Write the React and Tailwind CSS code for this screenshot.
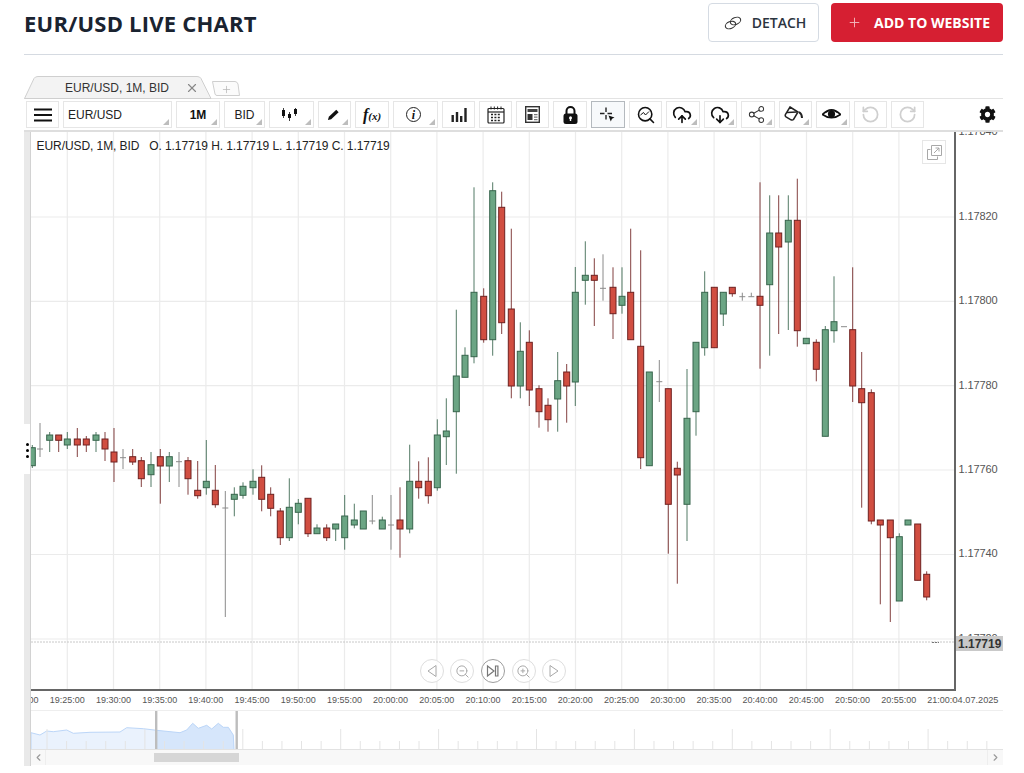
import { CloudUpload, CloudDownload, Share2, RotateCcw, RotateCw, Search, ZoomIn, ZoomOut, Plus, X, ChevronLeft, ChevronRight } from "lucide-react";
import { FaCog } from "react-icons/fa";

// x, high, low, body top, body bottom, type
const candles = [
  [32.3, 445, 468, 447.7, 465.7, "g"], [40, 423, 457, 449, 449, "d"], [49.7, 432, 452, 435, 440.3, "g"],
  [58.7, 435, 452, 435, 440.3, "r"], [67.3, 432, 449, 439, 445, "g"], [77.3, 428, 457, 439, 445, "r"],
  [86.3, 436, 452, 439, 445, "r"], [96, 432, 452, 435, 440.3, "g"], [105, 432, 461, 439, 449, "r"],
  [114, 428, 482, 452, 462, "r"], [123, 449, 469, 457.7, 457.7, "d"], [132.7, 449, 465, 456.7, 462, "r"],
  [141.3, 457, 487, 460.7, 478.7, "r"], [151, 452, 487, 464.7, 474.7, "g"], [160.3, 449, 503.7, 456.7, 466, "r"],
  [169.3, 452, 482, 456.7, 466, "g"], [179, 452, 487, 461.7, 461.7, "d"], [188, 457, 494.7, 460.7, 478.7, "r"],
  [197.7, 461, 498.7, 490.3, 495.7, "r"], [206.3, 440, 494.7, 481.3, 487.7, "g"], [215.3, 465, 507.7, 490.3, 504.7, "r"],
  [225.3, 491, 617, 508, 508, "d"], [234.3, 487.3, 516.3, 494.3, 499.3, "g"], [243, 482.3, 498.7, 486.3, 495.3, "g"],
  [253, 469.3, 494.7, 481.3, 487.7, "g"], [261.7, 465.3, 511.3, 477.3, 499.3, "r"], [270.7, 487.3, 516.3, 494.3, 508.3, "r"],
  [280.3, 508, 545, 511, 537.7, "r"], [289.3, 478.3, 541, 507.3, 537.7, "g"], [298.3, 499, 524.3, 503.3, 512.3, "g"],
  [308, 498.3, 537, 498.3, 533.7, "r"], [317, 524.3, 533.7, 528, 533.7, "g"], [326.7, 524.3, 541, 528, 537.7, "r"],
  [335.7, 524, 541, 524, 529, "g"], [344.7, 495, 549.7, 516, 537.7, "g"], [354.3, 503.7, 528.3, 520, 525, "g"],
  [363.3, 511, 529, 511, 529, "g"], [372.3, 495, 524.3, 521, 521, "d"], [382.3, 516.7, 529, 520, 529, "g"],
  [391, 495, 549.7, 525, 525, "d"], [400, 487.3, 557.7, 520, 529, "r"], [409.7, 444.7, 533.3, 481.3, 529, "g"],
  [418.7, 461.3, 498.7, 481.3, 487.7, "r"], [428.3, 457.3, 503.7, 481.3, 495.7, "r"], [437.3, 419.3, 490.7, 435, 487.7, "g"],
  [446.3, 398.3, 465, 431, 436.7, "g"], [456.3, 309.7, 473.7, 376, 411.7, "g"], [465, 347.3, 377.3, 355.3, 377.3, "g"],
  [474, 187.3, 363.3, 292.3, 356.7, "g"], [483.7, 288.3, 342.7, 296.3, 339.7, "r"], [492.7, 182.3, 355.7, 190.7, 339.7, "g"],
  [501.7, 191.7, 334, 207.3, 322.7, "r"], [511.3, 228.7, 398.3, 309, 386, "r"], [520.3, 322.3, 398.3, 351.3, 386, "g"],
  [529.3, 330.3, 406, 342.3, 390, "r"], [539, 385.3, 427.7, 388.7, 411.7, "r"], [548, 398.3, 431.7, 405.3, 419.7, "r"],
  [557.7, 352, 431.7, 380.7, 399, "g"], [566.7, 364, 422.7, 372, 386, "r"], [575.3, 267, 406, 292.3, 382, "g"],
  [585.3, 241.3, 304.7, 275.3, 280.3, "g"], [594.3, 258.3, 326, 275.3, 280.3, "r"], [603, 254.3, 300.7, 288.3, 288.3, "d"],
  [613, 267.3, 339, 287.3, 313.7, "r"], [622, 267.3, 313.7, 296.3, 305.3, "g"], [630.7, 228.7, 339.7, 292.3, 339.7, "r"],
  [640.7, 250.3, 469, 346.3, 457.7, "r"], [649.3, 372, 465.7, 372, 465.7, "g"], [659.3, 360, 402, 381.7, 381.7, "d"],
  [668.3, 388.7, 553.7, 388.7, 504.3, "r"], [677.3, 461.7, 583.7, 468.3, 475, "r"], [687, 369, 541, 418.3, 504.3, "g"],
  [696, 342.3, 435.7, 342.3, 411.7, "g"], [704.7, 271.3, 355.7, 292.3, 347.7, "g"], [714.3, 287.3, 347.7, 287.3, 347.7, "r"],
  [723.3, 292.3, 326, 292.3, 314, "g"], [732.3, 287.3, 296.7, 287.3, 293.7, "r"], [742.3, 292.7, 300.7, 296.7, 296.7, "d"],
  [751.3, 292.7, 296.7, 296.7, 296.7, "d"], [760, 182.3, 368.7, 296.3, 305.3, "r"], [769.7, 195.3, 355.7, 233, 284.7, "g"],
  [778.7, 195.3, 334, 233, 247, "r"], [788.3, 195.3, 330, 220.3, 242, "g"], [797.3, 178.7, 346.7, 220.3, 330.7, "r"],
  [806.3, 338.3, 343.7, 338.3, 343.7, "g"], [816.3, 339.3, 381.3, 342.3, 369.3, "r"], [825.3, 326, 436.3, 329.7, 436.3, "g"],
  [834, 276.3, 342.7, 321.7, 330.7, "g"], [844, 326.7, 326.7, 326.7, 326.7, "d"], [852.7, 267.3, 402, 329.7, 386, "r"],
  [861.7, 352, 507.7, 388.7, 402.7, "r"], [871.3, 389.3, 524.3, 392.7, 521, "r"], [880.3, 520, 604.3, 520, 525, "r"],
  [890.3, 520, 622, 520, 537.7, "r"], [899.3, 533.3, 601, 536.7, 601, "g"], [908, 520, 525, 520, 525, "g"],
  [917.7, 524, 580.3, 524, 580.3, "r"], [926.7, 571.3, 600.3, 574.3, 597, "r"],
];

const gridX = Array.from({ length: 19 }, (_, i) => 67.3 + i * 46.2);
const gridY = [217, 301.3, 385.7, 470, 554.5, 639];
const prices = ["1.17840", "1.17820", "1.17800", "1.17780", "1.17760", "1.17740", "1.17720"];
const times = [
  "19:20:00", "19:25:00", "19:30:00", "19:35:00", "19:40:00", "19:45:00", "19:50:00", "19:55:00", "20:00:00", "20:05:00", "20:10:00",
  "20:15:00", "20:20:00", "20:25:00", "20:30:00", "20:35:00", "20:40:00", "20:45:00", "20:50:00", "20:55:00", "21:00:00",
];
const mountain = "31,749 31,732.7 40,735 46.7,731 53.3,731.7 66.7,730 73.3,733.3 90,732.3 120,732 126.7,727.7 143.3,728.7 156.7,730.3 180,732.7 186.7,730 192.7,723.3 198.3,728.3 206.7,725.3 211.7,729 218.3,723.3 223.3,727.3 228.3,727.3 233.3,735 234,749";

const Corner = () => (
  <span className="absolute right-[2px] bottom-[2px] w-0 h-0 border-l-[6px] border-l-transparent border-b-[6px] border-b-[#bdbdbd]" />
);

const ToolButton = ({ width, corner, active, children }) => (
  <div
    className={
      "relative h-[27px] shrink-0 flex items-center justify-center border text-[#111] " +
      width + " " +
      (active ? "border-[#b4b9be] bg-[#f7f9fb]" : "border-[#e6e6e6] bg-white")
    }
  >
    {children}
    {corner && <Corner />}
  </div>
);

const Candle = ({ c }) => {
  const [x, hi, lo, top, bot, type] = c;
  if (type === "d") {
    return (
      <g stroke="#8a8a8a" strokeWidth="1">
        <line x1={x} x2={x} y1={hi} y2={lo} />
        <line x1={x - 3} x2={x + 3} y1={top} y2={top} />
      </g>
    );
  }
  const dark = type === "g" ? "#37644c" : "#6e2120";
  const fill = type === "g" ? "#6ba584" : "#d14e41";
  return (
    <g>
      <line x1={x} x2={x} y1={hi} y2={lo} stroke={dark} strokeWidth="1" opacity="0.85" />
      <rect x={x - 3} y={top} width="6" height={bot - top} fill={fill} stroke={dark} strokeWidth="1" />
    </g>
  );
};

const Tabs = () => (
  <div className="flex h-[23px] mt-[21px] border-b border-[#e3e3e3]">
    <div className="relative w-[188px] h-[23px] flex items-center text-[12px] text-[#333] pl-[41px]">
      <svg className="absolute left-0 top-0" width="188" height="23" viewBox="0 0 188 23">
        <path d="M0.5 22.5 L10 2.5 Q11 0.5 14 0.5 L173 0.5 Q176 0.5 177 2.5 L187 22.5 Z" fill="#f3f3f3" stroke="#cfcfcf" />
      </svg>
      <span className="relative">EUR/USD, 1M, BID</span>
      <X className="absolute left-[160.5px] top-[5px] text-[#888]" size={14} strokeWidth={2} />
    </div>
    <div className="relative w-[28px] h-[16px] mt-[5px] flex items-center justify-center">
      <svg className="absolute left-0 top-0" width="28" height="16" viewBox="0 0 28 16">
        <path d="M0.5 0.5 L23 0.5 Q25 0.5 26 3 L27.5 14.5 L5 14.5 Q3.5 14.5 3 13 Z" fill="#fbfbfb" stroke="#cfcfcf" />
      </svg>
      <Plus className="relative text-[#b5b5b5]" size={11} strokeWidth={1.6} />
    </div>
  </div>
);

const Toolbar = () => (
  <div className="h-[33px] flex items-center gap-[4px] pl-[2px] border-b-2 border-[#dedede]">
    <ToolButton width="w-[33px]">
      <svg width="18" height="14" viewBox="0 0 18 14" stroke="#111" strokeWidth="1.8"><path d="M0 1.5h18M0 7h18M0 12.5h18" /></svg>
    </ToolButton>
    <ToolButton width="w-[109px]" corner>
      <span className="w-full pl-[4px] text-[12px] text-[#222]">EUR/USD</span>
    </ToolButton>
    <ToolButton width="w-[44px]" corner><span className="text-[12px] font-bold">1M</span></ToolButton>
    <ToolButton width="w-[41px]" corner><span className="text-[12px] text-[#222]">BID</span></ToolButton>
    <ToolButton width="w-[45px]" corner>
      <svg width="15" height="13" viewBox="0 0 15 13" className="mr-[5px]">
        <path d="M1.5 0v10M7.5 4v9M13.5 0v8" stroke="#111" strokeWidth="0.8" />
        <path d="M0 2h3v6H0zM6 6h3v4H6zM12 1h3v5h-3z" fill="#111" />
      </svg>
    </ToolButton>
    <ToolButton width="w-[33px]" corner>
      <svg width="13" height="13" viewBox="0 0 14 14" className="mr-[3px]">
        <path d="M1 13 L2 9.5 L10 2 L12.5 4.5 L4.5 12 Z" fill="#111" />
      </svg>
    </ToolButton>
    <ToolButton width="w-[34px]">
      <span className="italic font-bold leading-none" style={{ fontFamily: '"Liberation Serif", serif' }}>
        <span className="text-[16px]">f</span><span className="text-[11px]">(x)</span>
      </span>
    </ToolButton>
    <ToolButton width="w-[45px]" corner>
      <span className="w-[15px] h-[15px] mr-[4px] rounded-full border-[1.5px] border-[#222] flex items-center justify-center text-[12px] italic font-bold" style={{ fontFamily: '"Liberation Serif", serif' }}>i</span>
    </ToolButton>
    <ToolButton width="w-[33px]">
      <svg width="16" height="15" viewBox="0 0 16 15">
        <path d="M0.5 8h2.4v7H0.5zM4.8 5h2.4v10H4.8zM9 9h2.4v6H9zM13.3 1h2.4v14h-2.4z" fill="#222" />
      </svg>
    </ToolButton>
    <ToolButton width="w-[33px]">
      <svg width="18" height="18" viewBox="0 0 18 18" fill="none" stroke="#222">
        <rect x="1" y="2.5" width="16" height="14.5" rx="1" strokeWidth="1.2" />
        <path d="M1 6h16" strokeWidth="1.2" />
        <path d="M4 0.5v3M7.3 0.5v3M10.6 0.5v3M14 0.5v3" strokeWidth="1" />
        <path d="M4 8.5h10M4 11.5h10M4 14.5h10" strokeWidth="1.6" strokeDasharray="2 1.4" />
      </svg>
    </ToolButton>
    <ToolButton width="w-[33px]">
      <svg width="15" height="17" viewBox="0 0 15 17">
        <rect x="0.7" y="0.7" width="13.6" height="15.6" fill="#fff" stroke="#333" strokeWidth="1.4" />
        <path d="M2.5 3h10v3h-10z" fill="#444" />
        <path d="M2.5 8h5v6h-5z" fill="#333" />
        <path d="M9 8h3.5v1.2H9zM9 10.5h3.5v1.2H9zM9 13h3.5v1.2H9z" fill="#777" />
      </svg>
    </ToolButton>
    <ToolButton width="w-[34px]">
      <svg width="15" height="18" viewBox="0 0 15 18">
        <path d="M3.5 8V5a4 4 0 0 1 8 0v3" fill="none" stroke="#111" strokeWidth="2" />
        <rect x="0.5" y="7.5" width="14" height="10.5" rx="2.5" fill="#111" />
        <circle cx="7.5" cy="11.8" r="1.5" fill="#fff" />
        <path d="M6.8 12h1.4v3H6.8z" fill="#fff" />
      </svg>
    </ToolButton>
    <ToolButton width="w-[34px]" active>
      <svg width="16" height="16" viewBox="0 0 16 16">
        <path d="M6 0.5v4.5M6 8v4.5M0 6.5h4.5M7.5 6.5h4.5" stroke="#222" strokeWidth="1.4" />
        <path d="M8.5 8.5 L14.5 10.5 L12 11.8 L10.8 14.5 Z" fill="#111" />
      </svg>
    </ToolButton>
    <ToolButton width="w-[33px]">
      <span className="relative flex">
        <Search size={20} strokeWidth={1.9} />
        <svg className="absolute left-[4px] top-[5px]" width="10" height="8" viewBox="0 0 10 8">
          <path d="M0.5 5 L3.5 2.5 L5.5 5 L9 1.5" fill="none" stroke="#111" strokeWidth="1" />
        </svg>
      </span>
    </ToolButton>
    <ToolButton width="w-[34px]" corner><CloudUpload className="mr-[2px]" size={20} strokeWidth={2} /></ToolButton>
    <ToolButton width="w-[33px]" corner><CloudDownload className="mr-[2px]" size={20} strokeWidth={2} /></ToolButton>
    <ToolButton width="w-[34px]" corner><Share2 className="mr-[3px] text-[#333]" size={19} strokeWidth={1.3} /></ToolButton>
    <ToolButton width="w-[33px]" corner>
      <svg width="20" height="17" viewBox="0 0 20 17" fill="none" stroke="#222" strokeWidth="1.5" className="mr-[3px]">
        <path d="M6 1 L14 6 L9.5 13.5 Q8.5 14.5 7 13.8 L2 10.8 Q0.7 9.8 1.5 8.4 Z" />
        <path d="M3 6.5 L13 6" />
        <path d="M15 6 Q18 8 18 12" strokeWidth="2" />
      </svg>
    </ToolButton>
    <ToolButton width="w-[34px]" corner>
      <svg width="19" height="13" viewBox="0 0 19 13" className="mr-[3px]">
        <path d="M0.5 6.5 Q9.5 -3 18.5 6.5 Q9.5 13 0.5 6.5 Z" fill="#fff" stroke="#111" strokeWidth="1.6" />
        <path d="M1 6 Q9.5 -2 18 6 L15 5 Q9.5 1 4 5 Z" fill="#111" />
        <circle cx="9.5" cy="6" r="3.6" fill="#111" />
      </svg>
    </ToolButton>
    <ToolButton width="w-[33px]"><RotateCcw className="text-[#cfcfcf]" size={19} strokeWidth={2.2} /></ToolButton>
    <ToolButton width="w-[33px]"><RotateCw className="text-[#cfcfcf]" size={19} strokeWidth={2.2} /></ToolButton>
    <div className="ml-auto mr-[7px] text-[#111]"><FaCog size={17} /></div>
  </div>
);

const NavButton = ({ strong, children }) => (
  <div className={"w-[24px] h-[24px] rounded-full bg-white/80 border flex items-center justify-center " + (strong ? "border-[#9d9d9d] text-[#777]" : "border-[#dedede] text-[#a8a8a8]")}>
    {children}
  </div>
);

const ChartNav = () => (
  <div className="absolute left-[388.5px] top-[527px] flex gap-[6.7px]">
    <NavButton>
      <svg width="12" height="14" viewBox="0 0 12 14" fill="none" stroke="currentColor"><path d="M10 1.5 L2 7 L10 12.5 Z" /></svg>
    </NavButton>
    <NavButton><ZoomOut size={15} strokeWidth={1.6} /></NavButton>
    <NavButton strong>
      <svg width="14" height="14" viewBox="0 0 14 14" fill="none" stroke="currentColor" strokeWidth="1.2"><path d="M1.5 2 L8 7 L1.5 12 Z" /><path d="M9.5 2h2.4v10H9.5z" /></svg>
    </NavButton>
    <NavButton><ZoomIn size={15} strokeWidth={1.6} /></NavButton>
    <NavButton>
      <svg width="12" height="14" viewBox="0 0 12 14" fill="none" stroke="currentColor"><path d="M2 1.5 L10 7 L2 12.5 Z" /></svg>
    </NavButton>
  </div>
);

const Chart = () => (
  <div className="flex h-[559px]">
    <div className="relative w-[923px] h-[559px] border-b-2 border-[#666] overflow-hidden">
      <svg width="923" height="557" viewBox="31 132 923 557" className="block">
        {gridX.map((x) => <line key={x} x1={x} x2={x} y1="132" y2="689" stroke="#ebebeb" strokeWidth="1.2" />)}
        {gridY.map((y) => <line key={y} x1="31" x2="954" y1={y} y2={y} stroke="#ebebeb" strokeWidth="1.2" />)}
        <line x1="31" x2="954" y1="642" y2="642" stroke="#c8c8c8" strokeDasharray="2 1" />
        <line x1="932" x2="939" y1="642.5" y2="642.5" stroke="#777" strokeDasharray="2 1" />
        {candles.map((c) => <Candle key={c[0]} c={c} />)}
      </svg>
      <div className="absolute left-[5.5px] top-[6px] text-[12px] leading-[16px] tracking-[-0.07px] text-[#222] whitespace-pre">
        {"EUR/USD, 1M, BID   O. 1.17719 H. 1.17719 L. 1.17719 C. 1.17719"}
      </div>
      <div className="absolute left-[891px] top-[8px] w-[24px] h-[24px] border border-[#e6e6e6] bg-white flex items-center justify-center">
        <svg width="15" height="15" viewBox="0 0 15 15" fill="none" stroke="#a8a8a8">
          <path d="M3.5 4.5H0.5v10h10v-3" />
          <path d="M4.5 0.5h10v10h-10z" />
          <path d="M7 8 L12 3M8.5 3H12v3.5" />
        </svg>
      </div>
      <ChartNav />
    </div>
    <div className="relative w-[49px] h-[559px] border-l-2 border-[#666] overflow-hidden">
      <div className="flex flex-col -mt-[42.6px] pl-[2.5px]">
        {prices.map((p) => (
          <div key={p} className="h-[84.4px] shrink-0 flex items-center text-[11px] tracking-[-0.1px] text-[#555]">{p}</div>
        ))}
      </div>
      <div className="absolute left-0 top-[504px] w-full h-[15px] pl-[2px] bg-[#c9c9c9] flex items-center text-[12px] leading-none font-semibold text-[#333]">
        1.17719
      </div>
    </div>
  </div>
);

const TimeAxis = () => (
  <div className="relative h-[19px] overflow-hidden">
    <div className="flex -ml-[33px] h-full items-center">
      {times.map((t) => (
        <div key={t} className="w-[46.2px] shrink-0 text-center text-[9px] text-[#555] whitespace-nowrap">{t}</div>
      ))}
    </div>
    <div className="absolute left-[921.5px] top-0 h-full w-[50px] bg-white flex items-center text-[9.2px] text-[#555]">04.07.2025</div>
  </div>
);

const Navigator = () => (
  <div className="h-[40px] border-t border-[#eeeeee]">
    <svg width="972" height="39" viewBox="31 711 972 39" className="block">
      <polygon points={mountain} fill="#eaf2fd" />
      <polygon points={mountain} fill="#d6e6fb" style={{ clipPath: "inset(0 0 0 126px)" }} />
      <polyline points={mountain} fill="none" stroke="#bcd6f8" />
      {Array.from({ length: 50 }, (_, i) => 47 + i * 19.58).map((x, i) => (
        <line key={x} x1={x} x2={x} y1={i % 5 === 0 ? 729 : 741} y2="749" stroke="#e4e4e4" />
      ))}
      <rect x="155" y="711" width="2.4" height="39" fill="#bdbdbd" />
      <rect x="235.5" y="711" width="2.4" height="39" fill="#bdbdbd" />
      <line x1="31" x2="1003" y1="749.5" y2="749.5" stroke="#e2e2e2" />
    </svg>
  </div>
);

const ScrollBar = () => (
  <div className="flex h-[15px] bg-[#f8f8f8]">
    <div className="w-[15px] flex items-center justify-center text-[#999] border-r border-[#eeeeee]"><ChevronLeft size={11} strokeWidth={2.5} /></div>
    <div className="w-[108px]" />
    <div className="w-[85px] h-[9px] mt-[3px] bg-[#d6d6d6]" />
    <div className="flex-1" />
    <div className="w-[16px] flex items-center justify-center text-[#999] border-l border-[#eeeeee]"><ChevronRight size={11} strokeWidth={2.5} /></div>
  </div>
);

const App = () => {
  return (
    <div className="w-[1024px] h-[773px] overflow-hidden bg-white pl-[24px] pr-[21px]" style={{ fontFamily: '"Liberation Sans", Arial, sans-serif' }}>
      <div className="h-[55px] border-b border-[#d5dae1] flex justify-between pt-[3px]" style={{ fontFamily: '"Open Sans", sans-serif' }}>
        <h1 className="mt-[5px] text-[22px] leading-[30px] font-bold tracking-[0.22px] text-[#1a2330]">EUR/USD LIVE CHART</h1>
        <div className="flex gap-[12px] h-[39px]">
          <button className="w-[111px] pl-[3px] flex items-center justify-center gap-[10px] border border-[#d5dbe3] rounded-[4px] text-[14px] font-semibold text-[#2b3440]">
            <svg width="18" height="14" viewBox="0 0 18 14" fill="none" stroke="#333" strokeWidth="1.1">
              <ellipse cx="11.5" cy="5" rx="5.4" ry="3.4" transform="rotate(-22 11.5 5)" />
              <ellipse cx="6.5" cy="9" rx="5.4" ry="3.4" transform="rotate(-22 6.5 9)" />
            </svg>
            DETACH
          </button>
          <button className="w-[172px] pl-[3px] flex items-center justify-center gap-[12px] rounded-[4px] bg-[#d61f32] text-[14px] font-bold text-white">
            <Plus className="text-[#f2b6bc]" size={15} strokeWidth={1.5} />
            ADD TO WEBSITE
          </button>
        </div>
      </div>
      <Tabs />
      <Toolbar />
      <div className="flex">
        <div className="relative w-[7px] h-[634px] bg-[#e9e9e9] border-r border-[#d2d2d2]">
          <div className="absolute left-0 top-[292px] w-[6px] h-[50px] bg-white flex flex-col items-center pt-[19px] gap-[3px]">
            <span className="w-[3px] h-[3px] rounded-full bg-black" />
            <span className="w-[3px] h-[3px] rounded-full bg-black" />
            <span className="w-[3px] h-[3px] rounded-full bg-black" />
          </div>
        </div>
        <div className="w-[972px]">
          <Chart />
          <TimeAxis />
          <Navigator />
          <ScrollBar />
        </div>
      </div>
    </div>
  );
};

export default App;
